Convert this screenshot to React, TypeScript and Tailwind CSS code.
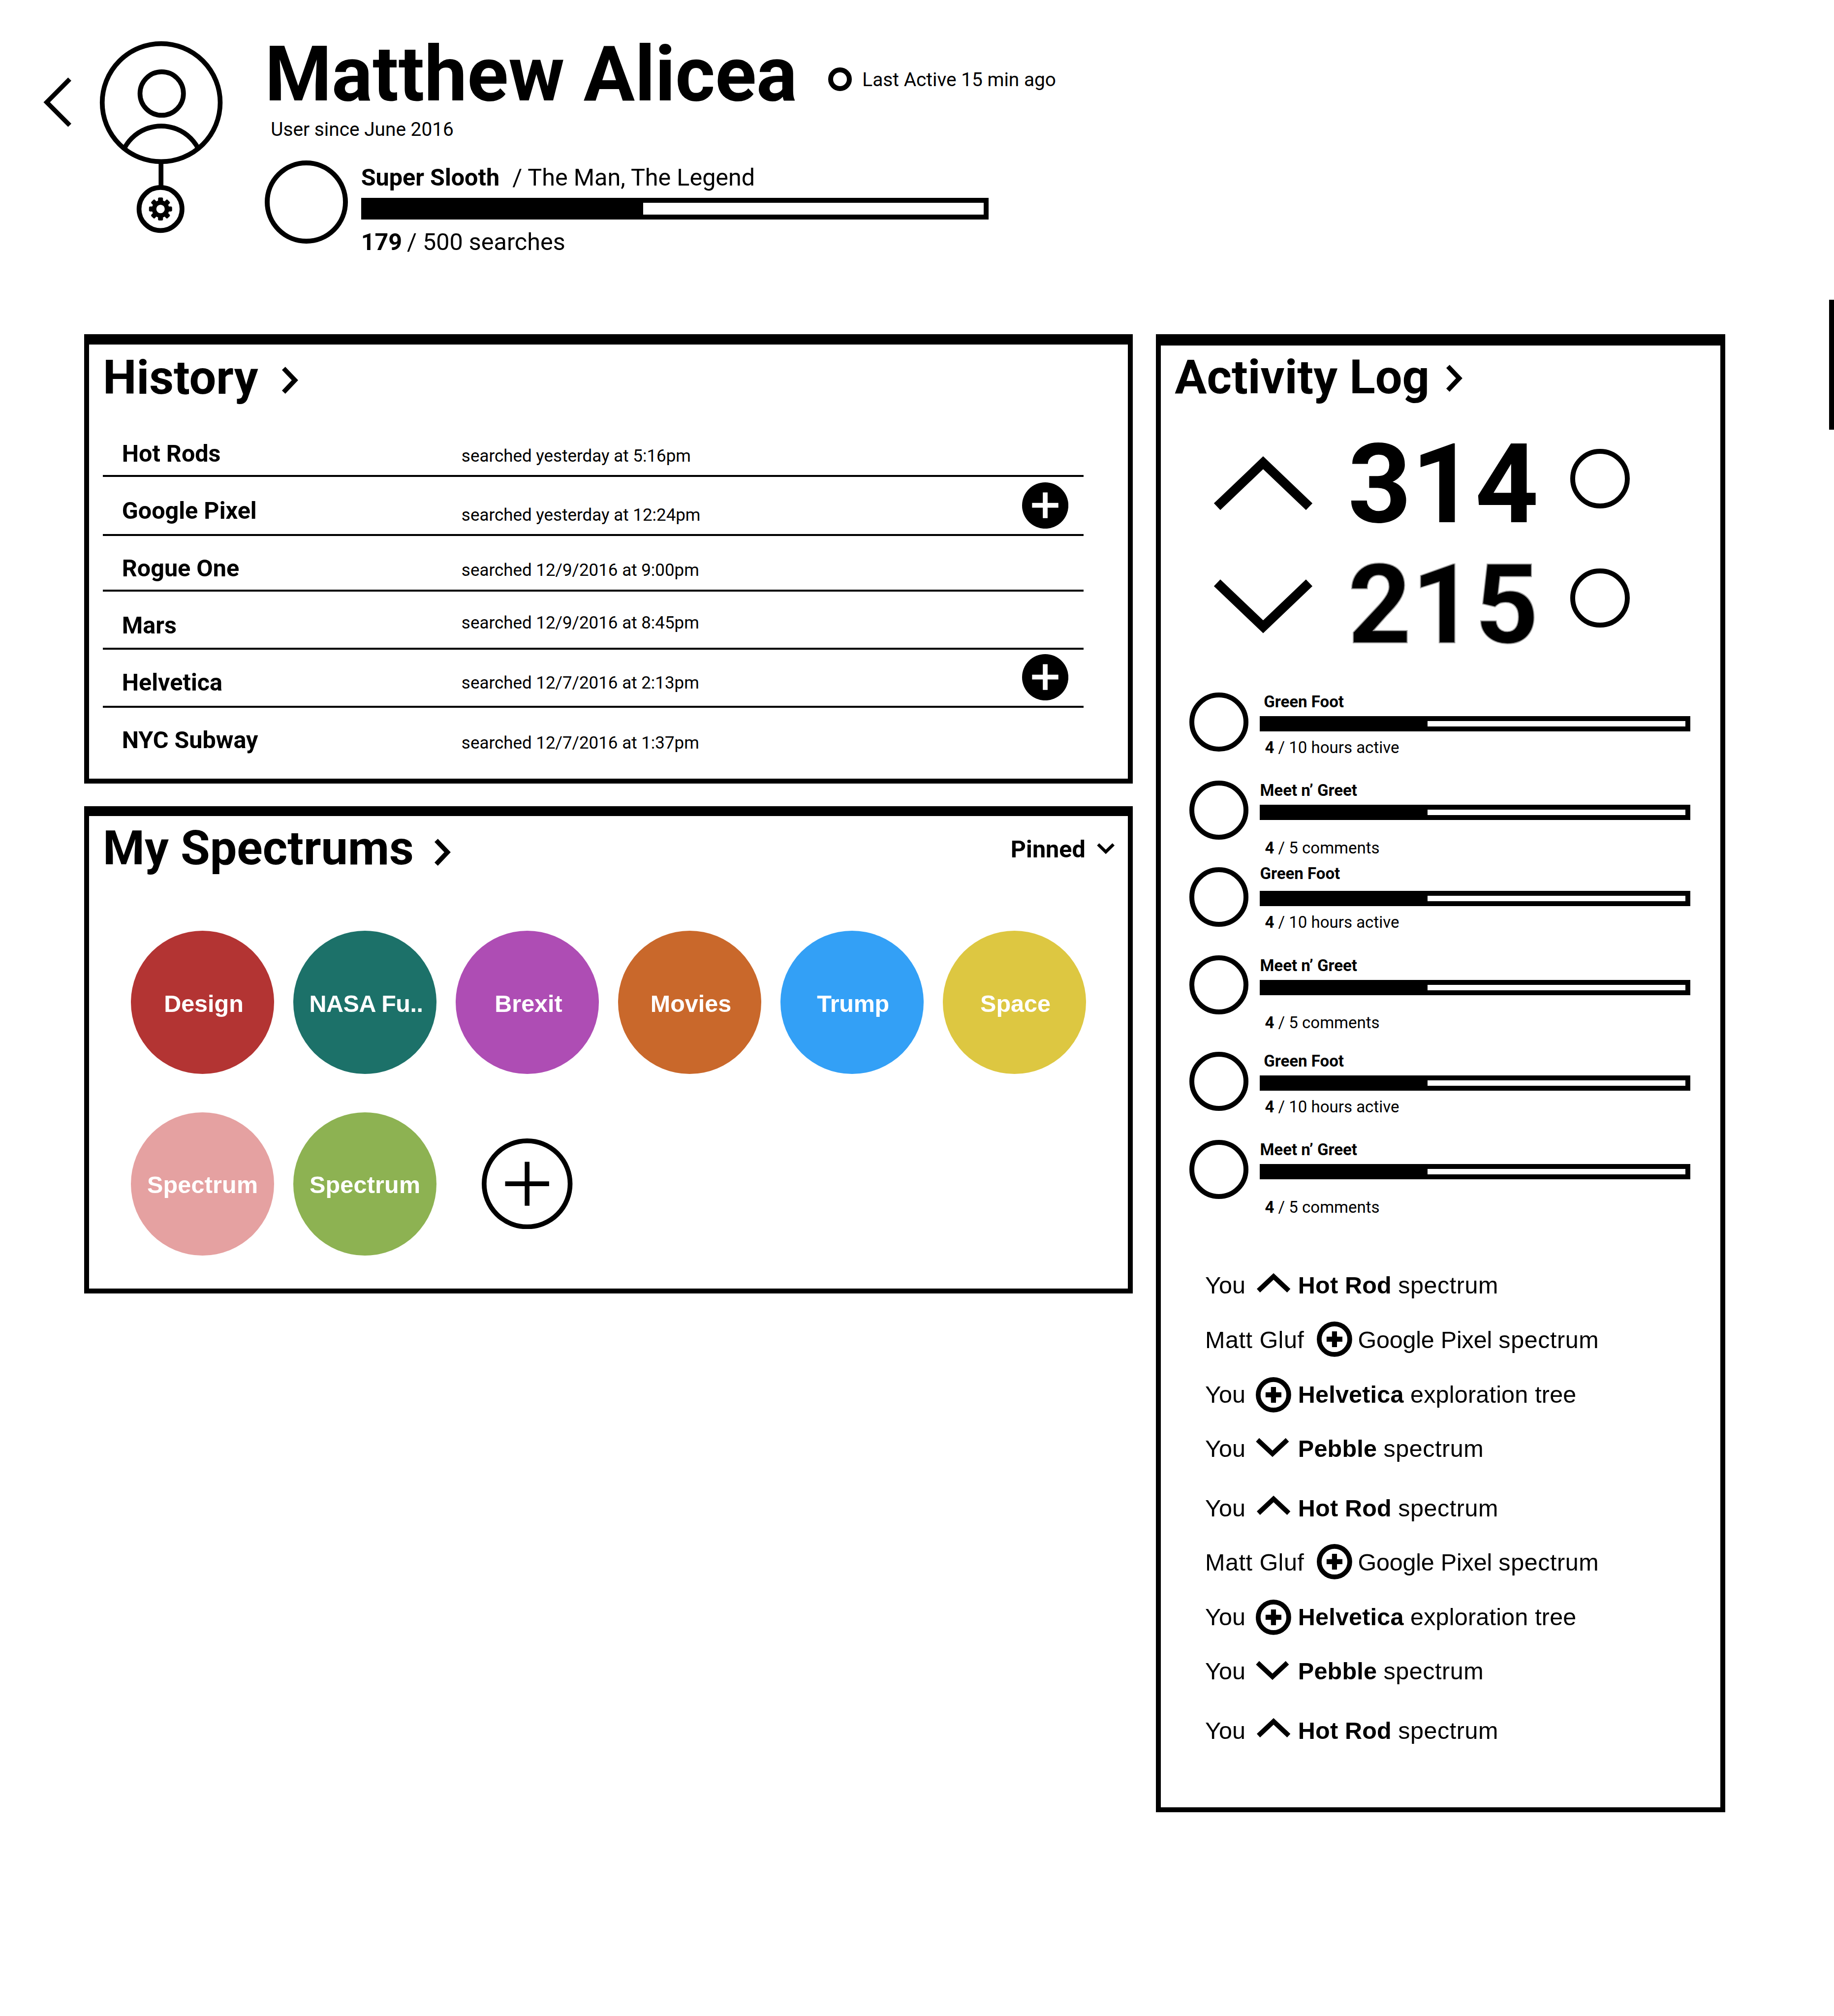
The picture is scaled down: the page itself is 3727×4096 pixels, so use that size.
import type { ReactNode } from "react";

/* The spacing scale is set on <main>, so w-100 is one hundred design pixels. */

const history = [
  { name: "Hot Rods", time: "searched yesterday at 5:16pm", row: "h-158 border-b-4", nameTop: "mt-85", timeTop: "mt-97", pin: "" },
  { name: "Google Pixel", time: "searched yesterday at 12:24pm", row: "h-124 border-b-4", nameTop: "mt-46.5", timeTop: "mt-62.75", pin: "mt-11.5" },
  { name: "Rogue One", time: "searched 12/9/2016 at 9:00pm", row: "h-116 border-b-4", nameTop: "mt-43", timeTop: "mt-54.75", pin: "" },
  { name: "Mars", time: "searched 12/9/2016 at 8:45pm", row: "h-122 border-b-4", nameTop: "mt-46.5", timeTop: "mt-48.75", pin: "" },
  { name: "Helvetica", time: "searched 12/7/2016 at 2:13pm", row: "h-122 border-b-4", nameTop: "mt-44.5", timeTop: "mt-52.75", pin: "mt-9.5" },
  { name: "NYC Subway", time: "searched 12/7/2016 at 1:37pm", row: "h-122", nameTop: "mt-42.5", timeTop: "mt-56.25", pin: "" },
];

const spectrums = [
  { name: "Design", color: "bg-[#b33433]", fit: "pl-5" },
  { name: "NASA Fu..", color: "bg-[#1c7169]", fit: "pl-5 tracking-[-0.5px]" },
  { name: "Brexit", color: "bg-[#ae4db4]", fit: "pl-5" },
  { name: "Movies", color: "bg-[#c9682b]", fit: "pl-5" },
  { name: "Trump", color: "bg-[#33a0f6]", fit: "pl-4 tracking-[-0.3px]" },
  { name: "Space", color: "bg-[#ddc741]", fit: "pl-4" },
  { name: "Spectrum", color: "bg-[#e5a1a1]", fit: "tracking-[0.2px]" },
  { name: "Spectrum", color: "bg-[#8db252]", fit: "tracking-[0.2px]" },
];

const badges = [
  { name: "Green Foot", goal: "/ 10 hours active", row: "h-184.25", nameBox: "mt-3.25 ml-8", bar: "mt-14", goalBox: "mt-17.5" },
  { name: "Meet n’ Greet", goal: "/ 5 comments", row: "h-182", nameBox: "mt-4.75", bar: "mt-14.25", goalBox: "mt-42" },
  { name: "Green Foot", goal: "/ 10 hours active", row: "h-184", nameBox: "-mt-3.5", bar: "mt-20.5", goalBox: "mt-17.75" },
  { name: "Meet n’ Greet", goal: "/ 5 comments", row: "h-202", nameBox: "mt-4.75", bar: "mt-14.25", goalBox: "mt-42" },
  { name: "Green Foot", goal: "/ 10 hours active", row: "h-184", nameBox: "mt-2.75 ml-8", bar: "mt-14.25", goalBox: "mt-17.75" },
  { name: "Meet n’ Greet", goal: "/ 5 comments", row: "h-180", nameBox: "mt-4.75", bar: "mt-14.25", goalBox: "mt-42" },
];

type Entry = { who: string; icon: "up" | "down" | "add"; subject: string; bold: boolean; rest: string; row: string };

const entries: Entry[] = [
  { who: "You", icon: "up", subject: "Hot Rod", bold: true, rest: "spectrum", row: "h-114" },
  { who: "Matt Gluf", icon: "add", subject: "Google Pixel", bold: false, rest: "spectrum", row: "h-114" },
  { who: "You", icon: "add", subject: "Helvetica", bold: true, rest: "exploration tree", row: "h-113.5" },
  { who: "You", icon: "down", subject: "Pebble", bold: true, rest: "spectrum", row: "h-124.5" },
];
const log: Entry[] = [...entries, ...entries, entries[0]];

function Title({ children, className }: { children: ReactNode; className: string }) {
  return <h2 className={`text-[97.06px] leading-100 font-bold whitespace-nowrap ${className}`}>{children}</h2>;
}

function ChevronRight({ className }: { className: string }) {
  return (
    <svg viewBox="0 0 34 57" className={`h-57 w-34 shrink-0 ${className}`} fill="none" stroke="black" strokeWidth="9.7">
      <path d="M3.5 3.5 27.2 28.4 3.5 53.3" />
    </svg>
  );
}

function VoteArrow({ className }: { className: string }) {
  return (
    <svg viewBox="0 0 208 116" className={`h-116 w-208 shrink-0 ${className}`} fill="none" stroke="black" strokeWidth="19.5">
      <path d="M7.6 106.6 104 14.6 200.4 106.6" />
    </svg>
  );
}

function Ring({ className }: { className: string }) {
  return <div className={`shrink-0 rounded-full border-[10px] border-black ${className}`} />;
}

function PinButton({ className }: { className: string }) {
  return (
    <svg viewBox="0 0 97 97" className={`size-97 shrink-0 ${className}`}>
      <circle cx="48.5" cy="48.5" r="48.5" />
      <path d="M48.5 21v54M21 48h55" stroke="white" strokeWidth="10" />
    </svg>
  );
}

function LogIcon({ icon, lift }: { icon: Entry["icon"]; lift: string }) {
  if (icon === "add")
    return (
      <svg viewBox="0 0 74 74" className={`size-74 shrink-0 ${lift}`} fill="none" stroke="black" strokeWidth="10">
        <circle cx="37" cy="37" r="32" />
        <path d="M37 20.5v33M20.5 37h33" strokeWidth="10.5" />
      </svg>
    );
  return icon === "up" ? (
    <svg viewBox="0 0 74 46" className="-mt-3 h-46 w-74 shrink-0" fill="none" stroke="black" strokeWidth="10">
      <path d="M5.5 38.5 37.2 8.6 69 38.5" />
    </svg>
  ) : (
    <svg viewBox="0 0 74 46" className="mt-1.5 h-46 w-74 shrink-0" fill="none" stroke="black" strokeWidth="10">
      <path d="M3.7 5.5 34.9 34.7 66 5.5" />
    </svg>
  );
}

function Avatar() {
  return (
    <svg viewBox="208 86 260 404" className="mt-86 ml-56 h-404 w-260 shrink-0" fill="none" stroke="black" strokeWidth="10">
      <clipPath id="face">
        <circle cx="337.4" cy="215.3" r="123.5" />
      </clipPath>
      <circle cx="337.4" cy="215.3" r="123.5" />
      <circle cx="338.5" cy="196.3" r="45.5" />
      <circle cx="337.4" cy="351.6" r="87.3" clipPath="url(#face)" />
      <path d="M337 343v46" />
      <circle cx="336" cy="438" r="45" />
      <g stroke="none" fill="black">
        <circle cx="336" cy="438" r="18.2" />
        {[0, 45, 90, 135].map((angle) => (
          <rect key={angle} x="330.8" y="413.8" width="10.4" height="48.4" rx="2.5" transform={`rotate(${angle} 336 438)`} />
        ))}
        <circle cx="336" cy="438" r="8.8" fill="white" />
      </g>
    </svg>
  );
}

function ProfileHeader() {
  return (
    <header className="flex h-700 items-start pl-88">
      <svg viewBox="88 160 64 108" className="mt-160 h-108 w-64 shrink-0" fill="none" stroke="black" strokeWidth="9.6">
        <path d="M146.4 166 98.3 214.3 146.4 262.6" />
      </svg>
      <Avatar />
      <div className="ml-86.5">
        <div className="mt-76 flex h-160 items-start whitespace-nowrap">
          <h1 className="w-1179.5 text-[155.3px] leading-160 font-bold">Matthew Alicea</h1>
          <Ring className="mt-65 size-50" />
          <p className="mt-71.25 ml-21.5 text-[38.8px] leading-40">Last Active 15 min ago</p>
        </div>
        <p className="mt-15.25 ml-12.5 text-[38.8px] leading-40">User since June 2016</p>
        <div className="mt-44.75 flex items-start">
          <Ring className="size-174" />
          <div className="ml-27.5 text-[48.5px] leading-50 whitespace-nowrap">
            <p className="mt-11">
              <b>Super Slooth</b>
              <span className="ml-27">/ The Man, The Legend</span>
            </p>
            <div className="mt-17 h-46 w-1313.5 border-[10px] border-black">
              <div className="h-full w-580 bg-black" />
            </div>
            <p className="mt-22.5">
              <b>179</b>
              <span className="ml-10">/ 500 searches</span>
            </p>
          </div>
        </div>
      </div>
    </header>
  );
}

function History() {
  return (
    <section className="h-940 border-[10px] border-t-[21px] border-black">
      <div className="mt-19.5 ml-29 flex h-99 items-start">
        <Title className="w-374.75">History</Title>
        <ChevronRight className="mt-26.75" />
      </div>
      <ul className="ml-29 w-2053">
        {history.map((item) => (
          <li key={item.name} className={`flex items-start border-black pl-40 whitespace-nowrap ${item.row}`}>
            <b className={`w-711 text-[48.5px] leading-50 ${item.nameTop}`}>{item.name}</b>
            <span className={`w-1173.5 text-[34.94px] leading-36 ${item.timeTop}`}>{item.time}</span>
            {item.pin && <PinButton className={item.pin} />}
          </li>
        ))}
      </ul>
    </section>
  );
}

function Spectrums() {
  return (
    <section className="mt-48 h-1020 border-[10px] border-t-[20px] border-black">
      <div className="mt-17.5 ml-29 flex h-99.25 items-start">
        <Title className="w-694.25">My Spectrums</Title>
        <ChevronRight className="mt-29.25" />
        <b className="mt-27 ml-1172.5 w-174 text-[48.5px] leading-50">Pinned</b>
        <svg viewBox="2290 1760 50 34" className="mt-34 h-34 w-50 shrink-0" fill="none" stroke="black" strokeWidth="6.6">
          <path d="M2298.8 1767.7 2314.9 1783.4 2331 1767.7" />
        </svg>
      </div>
      <div className="mt-122.75 ml-87.75 grid w-2000 grid-cols-6 gap-x-40 gap-y-80">
        {spectrums.map((item, i) => (
          <div
            key={i}
            className={`flex size-300 items-center justify-center rounded-full pt-5 font-['Liberation_Sans',sans-serif] text-[48.5px] leading-50 font-bold whitespace-nowrap text-white ${item.color} ${item.fit}`}
          >
            {item.name}
          </div>
        ))}
        <svg viewBox="0 0 190 190" className="size-190 place-self-center" fill="none" stroke="black" strokeWidth="10">
          <circle cx="95" cy="95" r="90" />
          <path d="M95 49v92M49 95h92" />
        </svg>
      </div>
    </section>
  );
}

function ActivityLog() {
  return (
    <section className="ml-48 h-3094 w-1192 shrink-0 border-[10px] border-t-[23px] border-black">
      <div className="mt-16.5 ml-29.25 flex h-99.25 items-start">
        <Title className="w-568.5">Activity Log</Title>
        <ChevronRight className="mt-23.25" />
      </div>

      <div className="mt-59.5 ml-110 flex h-232 items-start">
        <VoteArrow className="mt-54.75" />
        <b className="ml-73.75 w-466 text-[225.2px] leading-232">314</b>
        <Ring className="mt-41 size-124" />
      </div>
      <div className="mt-19.5 ml-110 flex h-232 items-start">
        <VoteArrow className="mt-60.5 rotate-180" />
        <b className="ml-73.75 w-466 text-[225.2px] leading-232 [-webkit-text-stroke:2px_#999999]">215</b>
        <Ring className="mt-39.25 size-124" />
      </div>

      <ul className="mt-67.25 ml-59.75 text-[33px] leading-32 whitespace-nowrap">
        {badges.map((badge, i) => (
          <li key={i} className={`flex items-start ${badge.row}`}>
            <Ring className="size-124" />
            <div className="ml-24 flex w-901.5 flex-col">
              <b className={badge.nameBox}>{badge.name}</b>
              <div className={`h-32 border-[10px] border-black ${badge.bar}`}>
                <div className="h-full w-341 bg-black" />
              </div>
              <p className={`ml-10.25 ${badge.goalBox}`}>
                <b>4</b> {badge.goal}
              </p>
            </div>
          </li>
        ))}
      </ul>

      <ul className="mt-100 ml-93 font-['Liberation_Sans',sans-serif] text-[48.5px] leading-50 whitespace-nowrap">
        {log.map((entry, i) => (
          <li key={i} className={`flex items-start ${entry.row}`}>
            <span className={entry.bold ? "w-106.5" : "w-233.5 tracking-[0.5px]"}>{entry.who}</span>
            <LogIcon icon={entry.icon} lift={entry.bold ? "-mt-11" : "-mt-13.25"} />
            <span className={entry.bold ? "ml-14 font-bold tracking-[0.2px]" : "ml-12.25 tracking-[-0.2px]"}>{entry.subject}</span>
            <span className={entry.rest === "spectrum" ? "ml-13.75 tracking-[0.55px]" : "ml-13.75 tracking-[0.2px]"}>{entry.rest}</span>
          </li>
        ))}
      </ul>
    </section>
  );
}

export default function App() {
  return (
    <main className="relative h-[4096px] w-[3727px] overflow-hidden bg-white font-['Roboto',sans-serif] text-black [--spacing:0.9706px]">
      <ProfileHeader />
      <div className="flex items-start pl-176">
        <div className="w-2196 shrink-0">
          <History />
          <Spectrums />
        </div>
        <ActivityLog />
      </div>
      <div className="absolute top-627 right-0 h-272.5 w-10 bg-black" />
    </main>
  );
}
